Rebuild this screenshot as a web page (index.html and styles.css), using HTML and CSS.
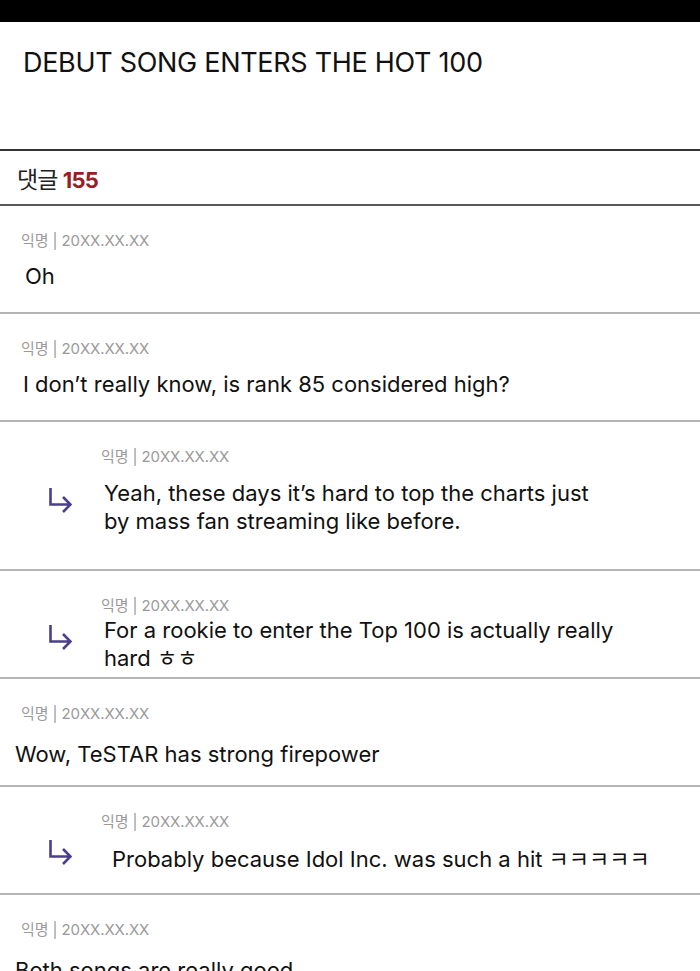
FILE: index.html
```html
<!DOCTYPE html>
<html lang="ko">
<head>
    <meta charset="UTF-8">
    <meta name="viewport" content="width=device-width, initial-scale=1.0">
    <title>DEBUT SONG ENTERS THE HOT 100</title>
    <link rel="stylesheet" href="styles.css">
</head>
<body>
    <div class="topbar"></div>

    <div class="article">
        <h1>DEBUT SONG ENTERS THE HOT 100</h1>
    </div>

    <div class="comments-head">
        댓글 <span class="count">155</span>
    </div>

    <ul class="comments">
        <li class="comment">
            <div class="meta">익명 | 20XX.XX.XX</div>
            <p class="text">Oh</p>
        </li>
        <li class="comment">
            <div class="meta">익명 | 20XX.XX.XX</div>
            <p class="text shift-l">I don’t really know, is rank 85 considered high?</p>
        </li>
        <li class="comment reply tall">
            <div class="meta">익명 | 20XX.XX.XX</div>
            <div class="reply-row">
                <svg class="arrow" width="24" height="26" viewBox="0 0 24 26"><path d="M2.5 0V16.5H22M15 9L22.5 16.5L15 24" fill="none" stroke="#4a3f8c" stroke-width="2.6"/></svg>
                <p class="text">Yeah, these days it’s hard to top the charts just<br>by mass fan streaming like before.</p>
            </div>
        </li>
        <li class="comment reply tight">
            <div class="meta">익명 | 20XX.XX.XX</div>
            <div class="reply-row">
                <svg class="arrow" width="24" height="26" viewBox="0 0 24 26"><path d="M2.5 0V16.5H22M15 9L22.5 16.5L15 24" fill="none" stroke="#4a3f8c" stroke-width="2.6"/></svg>
                <p class="text">For a rookie to enter the Top 100 is actually really<br>hard ㅎㅎ</p>
            </div>
        </li>
        <li class="comment wide">
            <div class="meta">익명 | 20XX.XX.XX</div>
            <p class="text flush">Wow, TeSTAR has strong firepower</p>
        </li>
        <li class="comment reply">
            <div class="meta">익명 | 20XX.XX.XX</div>
            <div class="reply-row">
                <svg class="arrow" width="24" height="26" viewBox="0 0 24 26"><path d="M2.5 0V16.5H22M15 9L22.5 16.5L15 24" fill="none" stroke="#4a3f8c" stroke-width="2.6"/></svg>
                <p class="text indent">Probably because Idol Inc. was such a hit ㅋㅋㅋㅋㅋ</p>
            </div>
        </li>
        <li class="comment wide">
            <div class="meta">익명 | 20XX.XX.XX</div>
            <p class="text flush">Both songs are really good</p>
        </li>
    </ul>
</body>
</html>
```

FILE: styles.css
```css
* {
    margin: 0;
    padding: 0;
    box-sizing: border-box;
}

body {
    font-family: Inter, "Noto Sans CJK KR", sans-serif;
    background: #fff;
    color: #111;
    width: 700px;
    overflow: hidden;
}

.topbar {
    height: 22px;
    background: #000;
}

.article {
    padding: 24px 23px 69px;
}

.article h1 {
    font-size: 27px;
    font-weight: 400;
    line-height: 34px;
    letter-spacing: -0.3px;
    color: #111;
}

.comments-head {
    border-top: 2px solid #333;
    border-bottom: 2px solid #5a5a5a;
    height: 57px;
    padding-left: 17px;
    line-height: 54px;
    font-family: "Noto Sans CJK KR", sans-serif;
    font-size: 23px;
    color: #222;
    letter-spacing: -1px;
}

.comments-head .count {
    font-family: Inter, sans-serif;
    font-weight: 700;
    font-size: 22px;
    color: #9c1c24;
    letter-spacing: -0.8px;
}

.comments {
    list-style: none;
}

.comment {
    border-bottom: 2px solid #b4b4b4;
    padding: 25px 0 22px 21px;
    height: 108px;
}

.meta {
    font-size: 15px;
    line-height: 20px;
    color: #9a9a9a;
    letter-spacing: -0.1px;
}

.text {
    margin-top: 10px;
    margin-left: 4px;
    font-size: 22px;
    line-height: 30px;
    letter-spacing: 0;
}

.text.shift-l {
    margin-left: 2px;
}

.text.flush {
    margin-left: -6px;
}

.comment.wide .text {
    margin-top: 15px;
}

.reply {
    padding-left: 101px;
}

.reply-row {
    display: flex;
    align-items: center;
    margin-left: -53px;
    margin-top: 12px;
}

.reply-row .text {
    margin: 0 0 0 32px;
    line-height: 28px;
}

.reply-row .text.indent {
    margin-left: 40px;
}

.arrow {
    flex-shrink: 0;
    margin-bottom: 12px;
}

.comment.tall {
    height: 149px;
}

.comment.tight .reply-row {
    margin-top: 0;
}

.comment.reply:not(.tall):not(.tight) .reply-row {
    margin-top: 8px;
}
```
